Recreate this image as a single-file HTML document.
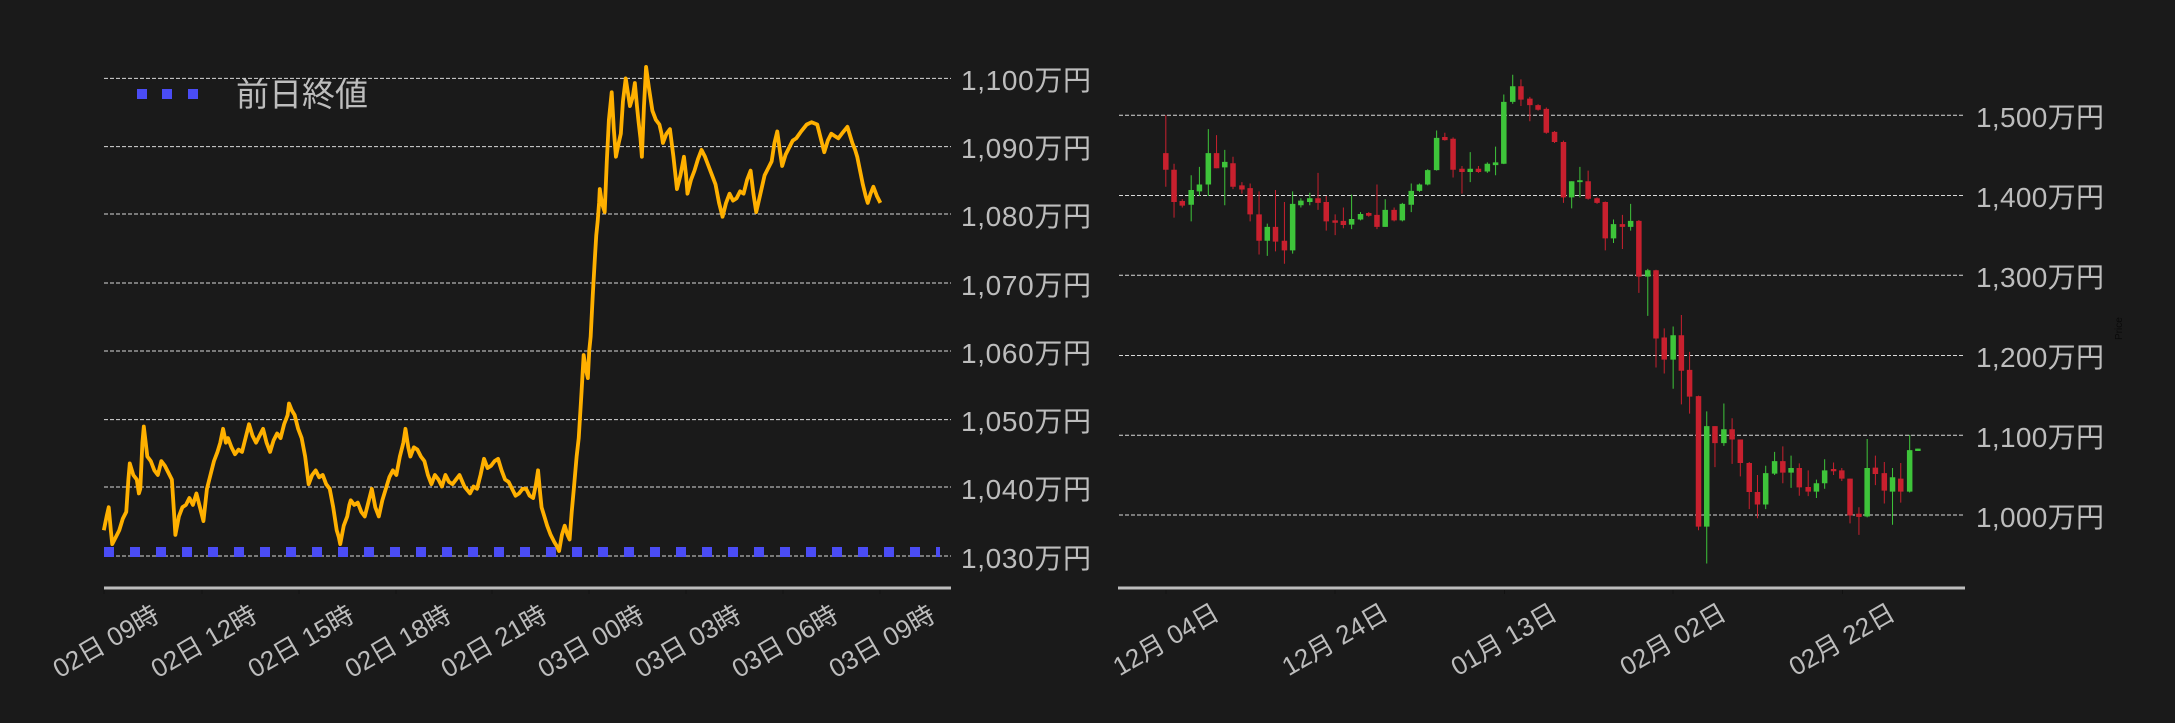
<!DOCTYPE html>
<html><head><meta charset="utf-8"><style>
html,body{margin:0;padding:0;background:#1a1a1a;}
svg{display:block}
text{font-family:"Liberation Sans","Noto Sans CJK JP",sans-serif;fill:#bdbdbd}
</style></head><body>
<svg width="2175" height="723" viewBox="0 0 2175 723" xmlns="http://www.w3.org/2000/svg">
<rect width="2175" height="723" fill="#1a1a1a"/>
<g stroke="#d8d8d8" stroke-width="1" stroke-dasharray="4 2">
<path d="M104 78.4H951M104 146.6H951M104 214H951M104 283H951M104 351H951M104 419.6H951M104 487H951M104 556H951"/>
</g>
<g font-size="28">
<text x="961" y="90" textLength="130">1,100万円</text>
<text x="961" y="158" textLength="130">1,090万円</text>
<text x="961" y="226" textLength="130">1,080万円</text>
<text x="961" y="295" textLength="130">1,070万円</text>
<text x="961" y="363" textLength="130">1,060万円</text>
<text x="961" y="431" textLength="130">1,050万円</text>
<text x="961" y="499" textLength="130">1,040万円</text>
<text x="961" y="568" textLength="130">1,030万円</text>
</g>
<path d="M104 552H940" stroke="#4a4cf5" stroke-width="10" stroke-dasharray="10 16"/>
<g transform="scale(0.70150 0.46113)">
<polyline fill="none" stroke="#ffb000" stroke-width="3.8" vector-effect="non-scaling-stroke" stroke-linejoin="round" points="148,1150 152,1120 155,1100 158,1150 160,1180 165,1165 170,1150 175,1125 180,1110 183,1040 185,1005 190,1030 195,1040 198,1070 200,1060 203,960 205,925 210,990 215,1000 220,1020 225,1030 230,1000 235,1010 240,1025 245,1040 248,1110 250,1160 255,1120 260,1100 265,1095 270,1080 275,1095 280,1070 285,1100 290,1130 295,1060 300,1030 305,1000 310,980 314,960 318,930 322,960 325,950 330,970 335,985 340,975 345,980 350,950 355,920 360,945 365,960 370,945 375,930 380,960 385,980 390,955 395,940 400,950 405,920 410,900 412,875 416,890 420,900 425,930 430,950 435,990 440,1050 445,1030 450,1020 455,1035 460,1030 465,1050 470,1060 475,1100 480,1150 483,1165 485,1180 490,1140 495,1120 498,1095 500,1085 505,1095 510,1090 515,1110 520,1120 525,1090 530,1060 535,1100 540,1120 545,1085 550,1060 555,1035 560,1020 565,1030 570,990 575,960 578,930 582,970 585,990 590,970 595,975 600,990 605,1000 610,1030 615,1050 620,1030 625,1040 630,1055 635,1030 640,1045 645,1050 650,1040 655,1030 662,1055 670,1070 675,1055 680,1060 685,1030 690,995 695,1015 700,1010 705,1000 710,995 715,1020 720,1040 725,1045 730,1060 735,1075 740,1070 745,1060 750,1060 755,1075 760,1080 764,1050 767,1020 770,1070 772,1100 776,1120 780,1140 785,1160 790,1175 794,1185 797,1195 801,1160 805,1140 809,1160 812,1170 815,1110 818,1060 822,990 825,950 829,850 832,770 835,800 838,820 840,760 842,730 845,640 848,560 850,510 852,480 854,440 855,410 858,440 862,460 865,350 868,260 870,230 872,200 875,280 878,340 882,310 885,290 888,220 892,170 895,200 898,230 902,210 905,180 908,230 910,260 913,300 915,340 918,230 921,145 925,190 930,240 935,260 940,270 943,290 945,310 950,290 955,280 960,340 965,410 970,380 975,340 978,380 980,420 985,390 990,370 995,345 1000,325 1005,340 1010,360 1015,380 1020,400 1025,440 1030,470 1035,440 1040,420 1045,435 1050,430 1055,415 1060,420 1065,390 1070,370 1074,420 1078,460 1084,420 1090,380 1095,365 1100,350 1104,310 1108,285 1112,330 1115,360 1120,335 1125,320 1130,305 1135,300 1142,285 1150,270 1157,265 1165,270 1170,300 1175,330 1180,305 1185,290 1190,295 1195,300 1200,290 1208,275 1212,295 1215,310 1219,325 1222,340 1226,370 1230,400 1234,425 1237,440 1241,420 1245,405 1250,425 1255,440"/>
</g>
<rect x="137" y="89" width="10" height="10" fill="#4a4cf5"/>
<rect x="162" y="89" width="10" height="10" fill="#4a4cf5"/>
<rect x="188" y="89" width="10" height="10" fill="#4a4cf5"/>
<text x="236" y="106" font-size="33">前日終値</text>
<path d="M104 588H951" stroke="#bdbdbd" stroke-width="3"/>
<path d="M104 590v4M202 590v4M299 590v4M396 590v4M492 590v4M589 590v4M686 590v4M783 590v4M880 590v4" stroke="#111" stroke-width="1"/>
<g font-size="26" text-anchor="end">
<text transform="translate(161 620) rotate(-30)">02日 09時</text>
<text transform="translate(259 620) rotate(-30)">02日 12時</text>
<text transform="translate(356 620) rotate(-30)">02日 15時</text>
<text transform="translate(453 620) rotate(-30)">02日 18時</text>
<text transform="translate(549 620) rotate(-30)">02日 21時</text>
<text transform="translate(646 620) rotate(-30)">03日 00時</text>
<text transform="translate(743 620) rotate(-30)">03日 03時</text>
<text transform="translate(840 620) rotate(-30)">03日 06時</text>
<text transform="translate(937 620) rotate(-30)">03日 09時</text>
</g>

<g stroke="#d8d8d8" stroke-width="1" stroke-dasharray="4 2">
<path d="M1119 115.3H1964M1119 195.5H1964M1119 275.3H1964M1119 355.5H1964M1119 435.3H1964M1119 515H1964"/>
</g>
<g font-size="28">
<text x="1976" y="127" textLength="128">1,500万円</text>
<text x="1976" y="207" textLength="128">1,400万円</text>
<text x="1976" y="287" textLength="128">1,300万円</text>
<text x="1976" y="367" textLength="128">1,200万円</text>
<text x="1976" y="447" textLength="128">1,100万円</text>
<text x="1976" y="527" textLength="128">1,000万円</text>
</g>
<text transform="translate(2122 340) rotate(-90)" font-size="10" style="fill:#0a0a0a">Price</text>
<g transform="translate(1100 0) scale(0.68558 0.46113)">
<path fill="none" stroke="#c8202e" stroke-width="1" vector-effect="non-scaling-stroke" d="M96 250V405M108 355V472M120 432V450M170 293V365M194 340V410M207 395V420M219 398V480M232 415V552M256 412V545M269 438V572M318 375V455M330 425V500M343 465V510M355 450V495M392 460V470M404 400V497M429 450V480M503 288V305M515 298V385M528 360V420M552 360V375M614 172V230M627 210V263M639 226V240M651 233V290M663 284V310M676 305V440M712 370V433M725 428V442M737 437V543M762 466V540M786 477V635M811 585V797M823 712V810M848 683V877M860 763V897M873 858V1150M897 924V1013M922 907V1006M934 953V1033M947 1002V1104M959 1030V1124M996 968V1048M1020 1005V1075M1033 1020V1076M1070 1003V1030M1082 1015V1043M1094 1038V1135M1107 1100V1160M1131 988V1052M1144 1002V1092M1168 1004V1090"/>
<path fill="none" stroke="#c8202e" stroke-width="5.5" vector-effect="non-scaling-stroke" d="M96 332V368M108 368V438M120 436V446M170 332V365M194 354V405M207 402V411M219 408V465M232 465V522M256 492V524M269 522V543M318 430V440M330 438V480M343 478V483M355 479V488M392 462V468M404 466V492M429 455V478M503 297V304M515 301V368M528 366V373M552 366V373M614 187V216M627 214V228M639 228V238M651 236V288M663 286V308M676 308V428M712 393V431M725 430V440M737 438V517M762 486V492M786 479V600M811 586V734M823 732V780M848 727V804M860 802V860M873 859V1142M897 924V961M922 931V953M934 953V1004M947 1004V1067M959 1067V1094M996 1000V1025M1020 1015V1057M1033 1056V1066M1070 1017V1022M1082 1020V1038M1094 1038V1118M1107 1114V1121M1131 1014V1028M1144 1026V1064M1168 1038V1066"/>
<path fill="none" stroke="#3ec43a" stroke-width="1" vector-effect="non-scaling-stroke" d="M133 380V480M145 362V425M158 280V425M182 325V445M244 485V555M281 415V550M293 430V450M306 418V445M367 422V497M380 460V478M416 432V492M441 440V480M454 398V460M466 398V416M478 367V402M491 283V370M540 330V395M565 352V375M577 318V380M589 205V356M602 162V225M688 393V452M700 362V428M749 476V527M774 442V500M799 583V685M836 708V843M885 892V1222M910 875V967M971 1010V1104M984 980V1030M1008 988V1058M1045 1040V1080M1057 996V1060M1119 952V1122M1156 1015V1138M1181 943V1068M1193 973V977"/>
<path fill="none" stroke="#3ec43a" stroke-width="5.5" vector-effect="non-scaling-stroke" d="M133 412V444M145 400V415M158 332V400M182 351V363M244 492V522M281 442V543M293 435V445M306 430V438M367 475V487M380 464V476M416 455V492M441 442V478M454 414V444M466 400V414M478 369V400M491 299V369M540 366V373M565 355V372M577 352V358M589 221V355M602 187V221M688 393V428M700 391V395M749 486V517M774 479V492M799 586V600M836 727V780M885 924V1142M910 931V961M971 1026V1094M984 1000V1027M1008 1015V1025M1045 1048V1066M1057 1020V1048M1119 1015V1120M1156 1035V1066M1181 976V1066M1193 973V978"/>
</g>
<path d="M1118 588H1965" stroke="#bdbdbd" stroke-width="3"/>
<path d="M1166 590v4M1335 590v4M1504.5 590v4M1673 590v4M1842.5 590v4" stroke="#111" stroke-width="1"/>
<g font-size="26" text-anchor="end">
<text transform="translate(1221 618) rotate(-30)">12月 04日</text>
<text transform="translate(1390 618) rotate(-30)">12月 24日</text>
<text transform="translate(1559 618) rotate(-30)">01月 13日</text>
<text transform="translate(1728 618) rotate(-30)">02月 02日</text>
<text transform="translate(1897 618) rotate(-30)">02月 22日</text>
</g>
</svg>
</body></html>
